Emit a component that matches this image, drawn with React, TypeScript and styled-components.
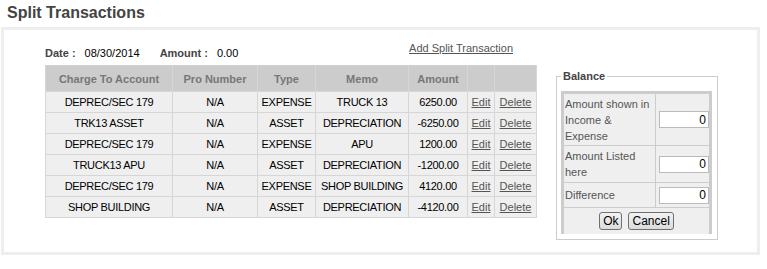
import React from 'react';
import styled, { createGlobalStyle } from 'styled-components';

const GlobalStyle = createGlobalStyle`
  body {
    margin: 0;
    background: #fff;
    font-family: "Liberation Sans", Arial, sans-serif;
    font-size: 11px;
    color: #000;
  }
`;

interface SplitRow {
  account: string
  pro: string
  type: string
  memo: string
  amount: string
}

const rows: SplitRow[] = [
  { account: 'DEPREC/SEC 179', pro: 'N/A', type: 'EXPENSE', memo: 'TRUCK 13', amount: '6250.00' },
  { account: 'TRK13 ASSET', pro: 'N/A', type: 'ASSET', memo: 'DEPRECIATION', amount: '-6250.00' },
  { account: 'DEPREC/SEC 179', pro: 'N/A', type: 'EXPENSE', memo: 'APU', amount: '1200.00' },
  { account: 'TRUCK13 APU', pro: 'N/A', type: 'ASSET', memo: 'DEPRECIATION', amount: '-1200.00' },
  { account: 'DEPREC/SEC 179', pro: 'N/A', type: 'EXPENSE', memo: 'SHOP BUILDING', amount: '4120.00' },
  { account: 'SHOP BUILDING', pro: 'N/A', type: 'ASSET', memo: 'DEPRECIATION', amount: '-4120.00' },
];

const columns = [
  { label: 'Charge To Account', width: 127 },
  { label: 'Pro Number', width: 85 },
  { label: 'Type', width: 58 },
  { label: 'Memo', width: 93 },
  { label: 'Amount', width: 59 },
  { label: '', width: 27 },
  { label: '', width: 42 },
];

function App() {
  return (
    <>
      <GlobalStyle />
      <Title>Split Transactions</Title>
      <Panel>
        <Content>
          <LeftColumn>
            <InfoRow>
              <DateInfo>
                <Label>Date :</Label>
                <Value>08/30/2014</Value>
                <Label $gap>Amount :</Label>
                <Value>0.00</Value>
              </DateInfo>
              <AddLink href="#">Add Split Transaction</AddLink>
            </InfoRow>
            <DataTable>
              <colgroup>
                {columns.map((c, i) => <col key={i} style={{ width: c.width }} />)}
              </colgroup>
              <thead>
                <tr>
                  {columns.map((c, i) => <HeadCell key={i}>{c.label}</HeadCell>)}
                </tr>
              </thead>
              <tbody>
                {rows.map((r, i) => (
                  <tr key={i}>
                    <Cell>{r.account}</Cell>
                    <Cell>{r.pro}</Cell>
                    <Cell>{r.type}</Cell>
                    <Cell>{r.memo}</Cell>
                    <Cell>{r.amount}</Cell>
                    <Cell><ActionLink href="#">Edit</ActionLink></Cell>
                    <Cell><ActionLink href="#">Delete</ActionLink></Cell>
                  </tr>
                ))}
              </tbody>
            </DataTable>
          </LeftColumn>
          <BalanceSet>
            <Legend>Balance</Legend>
            <BalanceTable>
              <tbody>
                <BalanceRow $h={52}>
                  <LabelCell>Amount shown in Income &amp; Expense</LabelCell>
                  <InputCell><Amount defaultValue="0" /></InputCell>
                </BalanceRow>
                <BalanceRow $h={37}>
                  <LabelCell>Amount Listed here</LabelCell>
                  <InputCell><Amount defaultValue="0" /></InputCell>
                </BalanceRow>
                <BalanceRow $h={25}>
                  <LabelCell>Difference</LabelCell>
                  <InputCell><Amount defaultValue="0" /></InputCell>
                </BalanceRow>
                <BalanceRow $h={26}>
                  <ButtonCell colSpan={2}>
                    <Btn>Ok</Btn>
                    <Btn>Cancel</Btn>
                  </ButtonCell>
                </BalanceRow>
              </tbody>
            </BalanceTable>
          </BalanceSet>
        </Content>
      </Panel>
    </>
  );
}

export default App;

const Title = styled.h1`
  margin: 0;
  padding-left: 7px;
  height: 27px;
  line-height: 26px;
  font-size: 16px;
  font-weight: bold;
  color: #444;
`

const Panel = styled.div`
  margin-left: 1px;
  width: 759px;
  box-sizing: border-box;
  border: 3px solid #eee;
`

const Content = styled.div`
  display: flex;
  align-items: flex-start;
  padding: 0 0 12px 41px;
`

const LeftColumn = styled.div`
  display: flex;
  flex-direction: column;
  width: 491px;
`

const InfoRow = styled.div`
  display: flex;
  justify-content: space-between;
  align-items: flex-start;
  height: 35px;
`

const DateInfo = styled.div`
  padding-top: 17px;
  line-height: 13px;
`

const Label = styled.span<{ $gap?: boolean }>`
  font-weight: bold;
  color: #444;
  margin-left: ${p => (p.$gap ? '20px' : '0')};
`

const Value = styled.span`
  margin-left: 9px;
  color: #000;
`

const AddLink = styled.a`
  margin: 12px 23px 0 0;
  line-height: 13px;
  color: #555;
  text-decoration: underline;
`

const DataTable = styled.table`
  width: 491px;
  table-layout: fixed;
  border-collapse: collapse;
  border: 1px solid #cfcfcf;
`

const HeadCell = styled.th`
  height: 25px;
  padding: 0;
  background: #ccc;
  color: #777;
  font-size: 11px;
  font-weight: bold;
  text-align: center;
  border: 1px solid #d6d6d6;
  border-top: none;
`

const Cell = styled.td`
  height: 20px;
  padding: 0;
  background: #efefef;
  text-align: center;
  font-size: 11px;
  letter-spacing: -0.3px;
  border: 1px solid #d6d6d6;
  white-space: nowrap;
`

const ActionLink = styled.a`
  color: #555;
  text-decoration: underline;
  letter-spacing: 0;
`

const BalanceSet = styled.fieldset`
  margin: 40px 0 0 20px;
  padding: 8px 5px 5px 4px;
  width: 151px;
  border: 1px solid #ccc;
  min-width: 0;
`

const Legend = styled.legend`
  padding: 0 2px;
  margin-left: 0;
  font-size: 11px;
  line-height: 13px;
  font-weight: bold;
  color: #444;
`

const BalanceTable = styled.table`
  width: 151px;
  border-collapse: separate;
  border-spacing: 0;
  background: #efefef;
  border: 3px solid #ccc;
  border-bottom: none;
`

const BalanceRow = styled.tr<{ $h: number }>`
  height: ${p => p.$h}px;
`

const LabelCell = styled.td`
  width: 87px;
  padding: 0 3px 0 1px;
  line-height: 16px;
  color: #555;
  font-size: 11px;
  border-right: 1px solid #ccc;
  border-bottom: 1px solid #ccc;
  vertical-align: middle;
`

const InputCell = styled.td`
  padding: 0;
  text-align: right;
  border-bottom: 1px solid #ccc;
  vertical-align: middle;
`

const Amount = styled.input`
  box-sizing: border-box;
  width: 50px;
  height: 17px;
  margin: 0;
  padding: 0 2px;
  border: 1px solid #bbb;
  background: #fff;
  text-align: right;
  font-family: "Liberation Sans", Arial, sans-serif;
  font-size: 12px;
  color: #000;
`

const ButtonCell = styled.td`
  padding: 0;
  text-align: center;
  vertical-align: middle;
`

const Btn = styled.button`
  height: 18px;
  margin: 0 3px;
  padding: 0 3px;
  border: 1px solid #707070;
  border-radius: 3px;
  background: linear-gradient(#f2f2f2, #dcdcdc);
  font-family: "Liberation Sans", Arial, sans-serif;
  font-size: 12px;
  color: #000;
  line-height: 14px;
`
